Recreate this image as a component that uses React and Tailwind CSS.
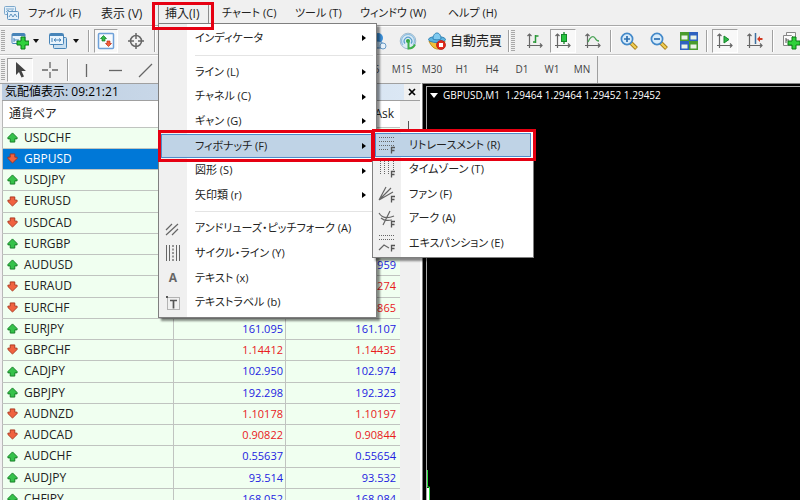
import clsx from "clsx";

const quotes = [
  { symbol: "USDCHF", up: true },
  { symbol: "GBPUSD", up: false, selected: true },
  { symbol: "USDJPY", up: true },
  { symbol: "EURUSD", up: false },
  { symbol: "USDCAD", up: false },
  { symbol: "EURGBP", up: true },
  { symbol: "AUDUSD", up: true, ask: "0.62959" },
  { symbol: "EURAUD", up: false, ask: "1.72274" },
  { symbol: "EURCHF", up: false, ask: "0.95865" },
  { symbol: "EURJPY", up: true, bid: "161.095", ask: "161.107" },
  { symbol: "GBPCHF", up: false, bid: "1.14412", ask: "1.14435" },
  { symbol: "CADJPY", up: true, bid: "102.950", ask: "102.974" },
  { symbol: "GBPJPY", up: true, bid: "192.298", ask: "192.323" },
  { symbol: "AUDNZD", up: false, bid: "1.10178", ask: "1.10197" },
  { symbol: "AUDCAD", up: false, bid: "0.90822", ask: "0.90844" },
  { symbol: "AUDCHF", up: true, bid: "0.55637", ask: "0.55654" },
  { symbol: "AUDJPY", up: true, bid: "93.514", ask: "93.532" },
  { symbol: "CHFJPY", up: true, bid: "168.052", ask: "168.084" },
];

const timeframes = ["M5", "M15", "M30", "H1", "H4", "D1", "W1", "MN"];

/* ---------- icons ---------- */

function Svg({ size = 18, children }) {
  return (
    <svg width={size} height={size} viewBox={`0 0 ${size} ${size}`} fill="none" className="shrink-0" aria-hidden="true">
      {children}
    </svg>
  );
}

const AppIcon = () => (
  <Svg>
    <rect x="1.5" y="2.5" width="11" height="8" rx="1" fill="#e3f0fa" stroke="#7fa9cc" />
    <path d="M3 5h8M3 8l2-2 2 2 3-2" stroke="#7fa9cc" />
    <rect x="4.5" y="7.5" width="11" height="8" rx="1" fill="#e3f0fa" stroke="#5f93bf" />
    <path d="M6 13l2-3 2 3 2-3 2 3" stroke="#5f93bf" />
  </Svg>
);

const NewChartIcon = () => (
  <Svg>
    <rect x="1" y="1.500" width="13" height="10" rx="1" fill="#e8f3fc" stroke="#4784b8" />
    <path d="M1 3h13" stroke="#4784b8" strokeWidth="2" />
    <path d="M3 6v4M3 8h5" stroke="#4784b8" />
    <path d="M10 5h4v4h4v4h-4v4h-4v-4H6V9h4z" fill="#2fd13b" stroke="#0c7a17" />
  </Svg>
);

const ProfilesIcon = () => (
  <Svg>
    <rect x="4.500" y="5.500" width="13" height="11" rx="1" fill="#c9dff0" stroke="#4784b8" />
    <rect x="0.500" y="1.500" width="14" height="11" rx="1" fill="#e8f3fc" stroke="#4784b8" />
    <path d="M1 3h13" stroke="#4784b8" strokeWidth="2" />
    <path d="M3 6v4M5 8h7M7 6.500L5 8l2 1.500M10 6.500L12 8l-2 1.500" stroke="#4784b8" />
  </Svg>
);

const MarketWatchIcon = () => (
  <Svg>
    <rect x="1.500" y="1.500" width="15" height="15" rx="1" fill="#f7fbff" stroke="#6ea0d8" strokeWidth="1.500" />
    <path d="M6.500 3.500L9.500 6.500H8V9H5V6.500H3.500z" fill="#35b948" stroke="#128024" strokeWidth=".7" />
    <path d="M11.500 14.500l-3-3H10V9h3v2.500h1.500z" fill="#f2603d" stroke="#c02f12" strokeWidth=".7" />
  </Svg>
);

const TargetIcon = () => (
  <Svg>
    <circle cx="9" cy="9" r="5.500" stroke="#666" strokeWidth="1.500" />
    <path d="M9 1v6M9 11v6M1 9h6M11 9h6" stroke="#666" strokeWidth="1.500" />
  </Svg>
);

const CommunityIcon = () => (
  <Svg>
    <circle cx="9" cy="6" r="5" fill="#3b8fd8" />
    <path d="M2 16c0-5 3-7 7-7 3 0 7 3 7 7z" fill="#b7d7f1" stroke="#3279ba" />
    <circle cx="14" cy="14" r="3" fill="#e7f2fb" stroke="#6b9cc7" />
  </Svg>
);

const SignalIcon = () => (
  <Svg>
    <circle cx="9" cy="9" r="7.800" fill="#dcebf5" stroke="#9fb9cc" />
    <path d="M4 13a6.500 6.500 0 1 1 10 0" stroke="#8fbfe0" strokeWidth="1.300" />
    <path d="M6 11.500a3.800 3.800 0 1 1 6 0" stroke="#5b9fce" strokeWidth="1.300" />
    <circle cx="9" cy="9" r="2" fill="#2fa53d" />
    <path d="M9.500 9v7.500c3 0 5-1 6.500-4" stroke="#3fb04c" strokeWidth="2" />
  </Svg>
);

const ExpertIcon = () => (
  <Svg>
    <path d="M1 9c2 5 5 8 9 8s6-4 7-8z" fill="#f0c13a" stroke="#c48a14" />
    <ellipse cx="9" cy="7.500" rx="8.500" ry="3" fill="#5db4e0" stroke="#2f82b4" />
    <path d="M5 7c0-4 2-6 4-6s4 2 4 6c-2 1.200-6 1.200-8 0z" fill="#7fcaf0" stroke="#2f82b4" />
    <circle cx="13" cy="13" r="4.500" fill="#e22a1c" stroke="#b11208" strokeWidth=".7" />
    <rect x="11" y="11" width="4" height="4" fill="#fff" />
  </Svg>
);

const Axes = () => (
  <path d="M3.500 2v14M1 13.500h15M1.500 4l2-2 2 2M14 11.500l2 2-2 2" stroke="#666" strokeWidth="1.200" />
);

const BarChartIcon = () => (
  <Svg>
    <Axes />
    <path d="M9.500 3v8M9.500 4h3M7 10h3" stroke="#2a9838" strokeWidth="1.500" />
  </Svg>
);

const CandleIcon = () => (
  <Svg>
    <Axes />
    <path d="M10 0v12" stroke="#15862a" strokeWidth="1.300" />
    <rect x="7.500" y="2.500" width="5" height="7" fill="#27c43f" stroke="#15862a" />
  </Svg>
);

const LineChartIcon = () => (
  <Svg>
    <Axes />
    <path d="M4 10c2-5 5-7 7-4 1 2 2 3 4 3" stroke="#4aa356" strokeWidth="1.300" />
  </Svg>
);

const ZoomIcon = ({ plus }) => (
  <Svg>
    <path d="M11 11l5.500 5.500" stroke="#a97f1b" strokeWidth="4" />
    <path d="M11 11l5 5" stroke="#f1cf54" strokeWidth="2.200" />
    <circle cx="7" cy="7" r="5.600" fill="#d9ecfa" stroke="#4389c9" strokeWidth="1.700" />
    <path d={plus ? "M4 7h6M7 4v6" : "M4 7h6"} stroke="#2d6fb0" strokeWidth="1.700" />
  </Svg>
);

const TileIcon = () => (
  <Svg>
    <rect x="0" y="0" width="9" height="9" fill="#4a9c2c" />
    <rect x="9" y="0" width="9" height="9" fill="#2e62c0" />
    <rect x="0" y="9" width="9" height="9" fill="#2e62c0" />
    <rect x="9" y="9" width="9" height="9" fill="#4a9c2c" />
    <path d="M1.500 3.500h6v4h-6zM10.500 3.500h6v4h-6zM1.500 12.500h6v4h-6zM10.500 12.500h6v4h-6z" fill="#eaf4e6" />
  </Svg>
);

const AutoScrollIcon = () => (
  <Svg>
    <Axes />
    <path d="M8 4l5 3.500L8 11z" fill="#2fbb46" stroke="#15862a" />
  </Svg>
);

const ShiftIcon = () => (
  <Svg>
    <Axes />
    <path d="M9.500 1v11" stroke="#3d6f9e" strokeWidth="1.500" />
    <path d="M11 7l3-3v2h2.500v2H14v2z" fill="#d33a22" />
  </Svg>
);

const IndicatorIcon = () => (
  <Svg>
    <path d="M4.500 3.500v-3h9v10M1.500 3.500h8l2 2v8h-10z" fill="#fafafa" stroke="#888" />
    <path d="M4 6v5M4 8h3" stroke="#555" />
    <path d="M10 5h4v4h4v4h-4v4h-4v-4H6V9h4z" fill="#2fd13b" stroke="#0c7a17" />
  </Svg>
);

const CursorIcon = () => (
  <Svg>
    <path d="M5 1v13l3-3 2.500 5.500 2.500-1L10.500 10H15z" fill="#444" />
  </Svg>
);

const CrosshairIcon = () => (
  <Svg>
    <path d="M9 1v6M9 11v6M1 9h6M11 9h6" stroke="#666" strokeWidth="1.300" />
  </Svg>
);

const StrokeIcon = ({ d }) => (
  <Svg>
    <path d={d} stroke="#666" strokeWidth="1.300" />
  </Svg>
);

// small "F" that every Fibonacci tool carries in its corner
const FMark = () => <path d="M13.500 17.500v-6H17M13.500 14.500H16.500" stroke="#555" strokeWidth="1.300" />;

const menuIcons = {
  pitchfork: (
    <Svg>
      <path d="M2 10l6-6M2 15L14 4M8 15l6-6" stroke="#666" strokeWidth="1.200" />
    </Svg>
  ),
  cycle: (
    <Svg>
      <path d="M2.500 1v16M5.500 1v16M12.500 1v16M15.500 1v16" stroke="#666" />
      <path d="M9 1v16" stroke="#666" strokeWidth="1.300" strokeDasharray="2 1.500" />
    </Svg>
  ),
  label: (
    <Svg>
      <rect x="3.500" y="3.500" width="12" height="12" stroke="#777" strokeDasharray="1 1" />
      <path d="M6 6.500h7M9.500 6.500v8" stroke="#555" strokeWidth="1.700" />
      <path d="M2 2h2v2H2z" fill="#555" />
    </Svg>
  ),
  retracement: (
    <Svg>
      <path d="M1 1.500h15M1 5.500h15M1 9.500h15M1 13.500h10" stroke="#666" strokeDasharray="1 1" />
      <FMark />
    </Svg>
  ),
  timezone: (
    <Svg>
      <path d="M2.500 1v13M6.500 1v13M10.500 1v13M15.500 1v9" stroke="#666" strokeDasharray="1 1" />
      <FMark />
    </Svg>
  ),
  fan: (
    <Svg>
      <path d="M1 15L8 2M1 15L13 3M1 15l14-8" stroke="#666" strokeWidth="1.200" />
      <FMark />
    </Svg>
  ),
  arc: (
    <Svg>
      <path d="M1 3c3 5 8 6 15 3M3 8c3 3 6 3 11 2M5 15L12 1" stroke="#666" strokeWidth="1.200" />
      <FMark />
    </Svg>
  ),
  expansion: (
    <Svg>
      <path d="M1 1.500h16M1 5.500h16" stroke="#666" strokeDasharray="1 1" />
      <path d="M1 16l5-5 5 3" stroke="#666" strokeWidth="1.200" />
      <FMark />
    </Svg>
  ),
};

function TrendArrow({ up }) {
  return (
    <svg width="11" height="11" viewBox="0 0 12 12" className="shrink-0" aria-hidden="true">
      {up ? (
        <path d="M6 1l5 5v1.500H8.500V11h-5V7.500H1V6z" fill="#35c24a" stroke="#127a22" />
      ) : (
        <path d="M6 11L1 6V4.500h2.500V1h5v3.500H11V6z" fill="#f0623f" stroke="#a8321a" />
      )}
    </svg>
  );
}

/* ---------- toolbar parts ---------- */

function Tool({ label, pressed, className, children }) {
  return (
    <button
      type="button"
      aria-label={label}
      className={clsx(
        "flex h-6 shrink-0 items-center justify-center",
        pressed && "border border-t-[#a0a0a0] border-l-[#a0a0a0] border-r-white border-b-white bg-[#f8f8f8]",
        className
      )}
    >
      {children}
    </button>
  );
}

const Grip = () => (
  <span className="mx-px h-[22px] w-1 shrink-0 bg-[repeating-linear-gradient(#a8a8a8_0_1px,#f0f0f0_1px_2px)]" />
);

const Divider = ({ className }) => (
  <span className={clsx("h-[22px] w-0.5 shrink-0 border-r border-l border-r-white border-l-[#a0a0a0]", className)} />
);

const Caret = () => (
  <svg width="6" height="4" viewBox="0 0 6 4" className="shrink-0" aria-hidden="true">
    <path d="M0 0h6L3 4z" fill="#111" />
  </svg>
);

/* ---------- menus ---------- */

function Menu({ className, children }) {
  return (
    <ul
      className={clsx(
        "absolute flex flex-col border border-[#7f7f7f] bg-linear-to-r from-[#f0f0f0] from-[28px] to-white to-[28px] px-0.5 shadow-[3px_3px_2px_rgba(0,0,0,0.45)]",
        className
      )}
    >
      {children}
    </ul>
  );
}

function MenuItem({ icon, label, arrow, active, frame, children }) {
  return (
    <li className="relative flex flex-1">
      <button
        type="button"
        className={clsx(
          "flex flex-1 items-center border text-left whitespace-nowrap",
          active ? "border-[#4f8ccb] bg-[#bfd3e6]" : "border-transparent"
        )}
      >
        <span className="flex w-[26px] justify-center pr-1">{icon}</span>
        <span className="flex-1 pl-[7px]">{label}</span>
        {arrow && (
          <svg width="4" height="6" viewBox="0 0 4 6" className="mr-[7px]" aria-hidden="true">
            <path d="M0 0l4 3-4 3z" fill="#000" />
          </svg>
        )}
      </button>
      {frame && <span className={clsx("pointer-events-none absolute -inset-y-1 border-[3px] border-[#e60012]", frame)} />}
      {children}
    </li>
  );
}

const MenuLine = () => <hr className="my-1 mr-px ml-[34px] border-[#e4e4e4]" />;

function InsertMenu() {
  return (
    <Menu className="top-[23px] -left-[7px] h-[295px] w-[219px] py-0.5">
      <MenuItem label="インディケータ" arrow />
      <MenuLine />
      <MenuItem label="ライン (L)" arrow />
      <MenuItem label="チャネル (C)" arrow />
      <MenuItem label="ギャン (G)" arrow />
      <MenuItem label="フィボナッチ (F)" arrow active frame="-left-[3px] right-0">
        <Menu className="-top-[3px] left-[211px] h-[127px] w-[162px] py-px">
          <MenuItem icon={menuIcons.retracement} label="リトレースメント (R)" active frame="-left-[3px] -right-[5px]" />
          <MenuItem icon={menuIcons.timezone} label="タイムゾーン (T)" />
          <MenuItem icon={menuIcons.fan} label="ファン (F)" />
          <MenuItem icon={menuIcons.arc} label="アーク (A)" />
          <MenuItem icon={menuIcons.expansion} label="エキスパンション (E)" />
        </Menu>
      </MenuItem>
      <MenuItem label="図形 (S)" arrow />
      <MenuItem label="矢印類 (r)" arrow />
      <MenuLine />
      <MenuItem icon={menuIcons.pitchfork} label="アンドリューズ・ピッチフォーク (A)" />
      <MenuItem icon={menuIcons.cycle} label="サイクル・ライン (Y)" />
      <MenuItem icon={<span className="text-xs font-bold text-[#666]">A</span>} label="テキスト (x)" />
      <MenuItem icon={menuIcons.label} label="テキストラベル (b)" />
    </Menu>
  );
}

function MenuBar() {
  return (
    <nav className="relative z-10 flex h-[26px] shrink-0 border-b border-[#a8a8a8] text-[11px] whitespace-nowrap">
      <span className="flex w-7 items-center pl-[3px]">
        <AppIcon />
      </span>
      <button type="button" className="w-[73px] pt-0.5 text-left">ファイル (F)</button>
      <button type="button" className="w-16 pt-0.5 text-left text-xs">表示 (V)</button>
      <div className="relative flex w-[57px]">
        <span className="absolute top-1 -left-[7px] h-[19px] w-[51px] border border-b-0 border-[#8c8c8c]" />
        <button type="button" className="flex-1 pt-0.5 text-left text-xs">挿入(I)</button>
        <InsertMenu />
        <span className="pointer-events-none absolute top-0.5 -left-[13px] h-7 w-[62px] border-[3px] border-[#e60012]" />
      </div>
      <button type="button" className="w-[73px] pt-0.5 text-left">チャート (C)</button>
      <button type="button" className="w-[65px] pt-0.5 text-left">ツール (T)</button>
      <button type="button" className="w-[88px] pt-0.5 text-left">ウィンドウ (W)</button>
      <button type="button" className="pt-0.5 text-left">ヘルプ (H)</button>
    </nav>
  );
}

function StandardToolbar() {
  return (
    <div className="flex h-[29px] shrink-0 items-center overflow-hidden border-t border-b border-t-white border-b-[#c4c4c4]">
      <Grip />
      <Tool label="新規チャート" className="w-[27px]"><NewChartIcon /></Tool>
      <Caret />
      <Tool label="プロファイル" className="ml-1 w-[30px]"><ProfilesIcon /></Tool>
      <Caret />
      <Divider className="ml-[9px]" />
      <Tool label="気配値表示" pressed className="ml-1 w-6"><MarketWatchIcon /></Tool>
      <Tool label="データウィンドウ" className="w-9"><TargetIcon /></Tool>
      <Divider />
      <Tool label="コミュニティ" className="ml-[212px] w-5"><CommunityIcon /></Tool>
      <Tool label="シグナル" className="ml-1 w-8"><SignalIcon /></Tool>
      <Tool className="ml-1 gap-1 whitespace-nowrap">
        <ExpertIcon />
        <span className="text-[13px]">自動売買</span>
      </Tool>
      <Divider className="ml-1.5" />
      <Grip />
      <Tool label="バーチャート" className="ml-1 w-[30px]"><BarChartIcon /></Tool>
      <Tool label="ローソク足" pressed className="w-[26px]"><CandleIcon /></Tool>
      <Tool label="ラインチャート" className="w-[34px]"><LineChartIcon /></Tool>
      <Divider />
      <Tool label="ズームイン" className="w-[34px]"><ZoomIcon plus /></Tool>
      <Tool label="ズームアウト" className="w-[26px]"><ZoomIcon /></Tool>
      <Tool label="整列" className="w-[34px]"><TileIcon /></Tool>
      <Divider className="mr-1" />
      <Tool label="自動スクロール" pressed className="w-[26px]"><AutoScrollIcon /></Tool>
      <Tool label="チャートシフト" className="w-[34px]"><ShiftIcon /></Tool>
      <Divider />
      <Tool label="インディケータリスト" className="w-[34px]"><IndicatorIcon /></Tool>
    </div>
  );
}

function LineToolbar() {
  return (
    <div className="flex h-7 shrink-0 items-center overflow-hidden border-t border-white">
      <Grip />
      <Tool label="カーソル" pressed className="ml-px w-[26px]"><CursorIcon /></Tool>
      <Tool label="クロスヘア" className="w-[34px]"><CrosshairIcon /></Tool>
      <Divider className="mr-0.5" />
      <Tool label="垂直線" className="w-[30px]"><StrokeIcon d="M9.500 3v13" /></Tool>
      <Tool label="水平線" className="w-[30px]"><StrokeIcon d="M2 9.500h13" /></Tool>
      <Tool label="トレンドライン" className="w-[30px]"><StrokeIcon d="M2 16L15 3" /></Tool>
      <div className="ml-[196px] flex text-[10px] text-[#444]">
        {timeframes.map((tf) => (
          <button key={tf} type="button" className="w-[30px]">{tf}</button>
        ))}
      </div>
      <span className="h-full w-px bg-[#a0a0a0]" />
    </div>
  );
}

/* ---------- market watch ---------- */

function MarketWatch() {
  return (
    <section className="flex w-[422px] shrink-0 flex-col overflow-hidden border-t border-r-2 border-t-[#a0a0a0] border-r-white pl-0.5">
      <div className="flex h-4 shrink-0 items-center">
        <h2 className="flex h-full w-[402px] items-center bg-linear-to-r from-[#bccde0] to-[#dbe7f4] pl-[3px] text-black">
          気配値表示: 09:21:21
        </h2>
        <button type="button" aria-label="閉じる" className="ml-1">
          <svg width="8" height="8" viewBox="0 0 8 8">
            <path d="M1 1l6 6M7 1L1 7" stroke="#000" strokeWidth="1.700" />
          </svg>
        </button>
      </div>
      <div className="flex flex-1 items-start border-t border-[#a0a0a0]">
        <table className="w-[398px] shrink-0 table-fixed border-collapse border-l border-[#b8b8b8]">
          <thead>
            <tr className="h-[26px] bg-white">
              <th className="w-[171px] pl-1.5 text-left font-normal">通貨ペア</th>
              <th className="w-28" />
              <th className="pr-1.5 text-right font-normal">Ask</th>
            </tr>
          </thead>
          <tbody>
            {quotes.map((q) => (
              <tr
                key={q.symbol}
                className={clsx(
                  "h-[21px] border-t border-[#c0c4c0] nth-[4n]:h-[22px]",
                  q.selected ? "bg-[#0078d7] text-white" : "bg-[#f0fff0]"
                )}
              >
                <td className="border-r border-[#c0c4c0] p-0 pl-1">
                  <span className="flex items-center gap-1.5 leading-4">
                    <TrendArrow up={q.up} />
                    {q.symbol}
                  </span>
                </td>
                <td className={clsx("border-r border-[#c0c4c0] p-0 pr-0.5 text-right text-[11px] leading-4", q.up ? "text-[#2222e0]" : "text-[#e8201c]")}>
                  {q.bid}
                </td>
                <td className={clsx("p-0 pr-1 text-right text-[11px] leading-4", q.up ? "text-[#2222e0]" : "text-[#e8201c]")}>
                  {q.ask}
                </td>
              </tr>
            ))}
          </tbody>
        </table>
        <span className="mt-5 ml-2 h-3 w-px bg-[#555]" />
      </div>
    </section>
  );
}

function ChartWindow() {
  return (
    <section className="flex flex-1 border-t border-l border-[#808080] bg-black pt-0.5 pl-[3px]">
      <div className="flex flex-1 flex-col justify-between overflow-hidden border-t border-l border-[#a8a8a8]">
        <h2 className="flex items-center gap-[5px] pl-[3px] text-[10px] leading-4 whitespace-pre text-white">
          <svg width="8" height="5" viewBox="0 0 8 5" aria-hidden="true">
            <path d="M0 0h8L4 5z" fill="#fff" />
          </svg>
          {"GBPUSD,M1  1.29464 1.29464 1.29452 1.29452"}
        </h2>
        <svg width="6" height="30" viewBox="0 0 6 30" fill="none" aria-hidden="true">
          <path d="M.5 0v17h2v13" stroke="#27e03a" />
          <path d="M0 18h2v12H0z" fill="#fff" />
        </svg>
      </div>
    </section>
  );
}

export default function App() {
  return (
    <div className="flex h-screen flex-col overflow-hidden bg-[#f0f0f0] font-['Open_Sans','Noto_Sans_CJK_JP',sans-serif] text-xs text-[#222] [font-feature-settings:'palt']">
      <MenuBar />
      <StandardToolbar />
      <LineToolbar />
      <main className="flex min-h-0 flex-1">
        <MarketWatch />
        <ChartWindow />
      </main>
    </div>
  );
}
